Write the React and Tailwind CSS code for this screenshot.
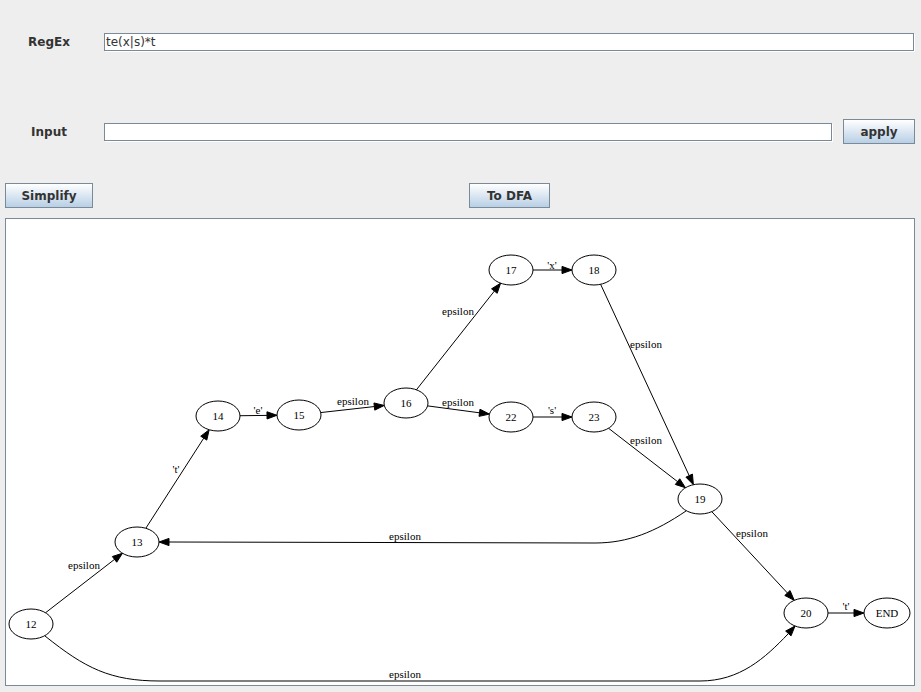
import React from "react";

const N = {
  "12": [31, 624, 22],
  "13": [137, 542, 22],
  "14": [218, 416, 22],
  "15": [299, 415, 22],
  "16": [406, 403, 22],
  "17": [511, 270, 22],
  "18": [594, 270, 22],
  "22": [511, 417, 22],
  "23": [594, 417, 22],
  "19": [700, 499, 22],
  "20": [806, 613, 22],
  END: [887, 613, 23],
};
const RY = 15;

const edges = [
  ["12", "13", "epsilon", 84, 565],
  ["13", "14", "'t'", 176, 469],
  ["14", "15", "'e'", 258, 410],
  ["15", "16", "epsilon", 353, 401],
  ["16", "17", "epsilon", 458, 311],
  ["16", "22", "epsilon", 458, 402],
  ["17", "18", "'x'", 552, 265],
  ["22", "23", "'s'", 552, 410],
  ["18", "19", "epsilon", 646, 344],
  ["23", "19", "epsilon", 646, 440],
  ["19", "20", "epsilon", 752, 533],
  ["20", "END", "'t'", 846, 606],
];

function bnd(c, dx, dy) {
  const [x, y, rx] = c;
  const t = 1 / Math.sqrt((dx / rx) ** 2 + (dy / RY) ** 2);
  return [x + t * dx, y + t * dy];
}

function Arrow({ tip, from }) {
  const dx = tip[0] - from[0];
  const dy = tip[1] - from[1];
  const l = Math.hypot(dx, dy);
  const ux = dx / l, uy = dy / l;
  const bx = tip[0] - 10 * ux, by = tip[1] - 10 * uy;
  const nx = -uy * 3.6, ny = ux * 3.6;
  return (
    <polygon
      points={`${tip[0]},${tip[1]} ${bx + nx},${by + ny} ${bx - nx},${by - ny}`}
      fill="#000"
      stroke="#000"
      strokeWidth="1"
    />
  );
}

function Edge({ a, b }) {
  const A = N[a], B = N[b];
  const dx = B[0] - A[0], dy = B[1] - A[1];
  const s = bnd(A, dx, dy);
  const t = bnd(B, -dx, -dy);
  const l = Math.hypot(t[0] - s[0], t[1] - s[1]);
  const e = [t[0] - ((t[0] - s[0]) / l) * 10, t[1] - ((t[1] - s[1]) / l) * 10];
  return (
    <g>
      <line x1={s[0]} y1={s[1]} x2={e[0]} y2={e[1]} stroke="#000" strokeWidth="1" />
      <Arrow tip={t} from={s} />
    </g>
  );
}

function Label({ x, y, children }) {
  return (
    <text x={x} y={y + 3.5} textAnchor="middle" fontSize="11" fontFamily="'Liberation Serif', serif" fill="#000">
      {children}
    </text>
  );
}

function Graph() {
  return (
    <svg width="908" height="466" viewBox="6 219 908 466" className="block">
      {edges.map(([a, b, lab, lx, ly], i) => (
        <g key={i}>
          <Edge a={a} b={b} />
          <Label x={lx} y={ly}>{lab}</Label>
        </g>
      ))}
      {/* 19 -> 13 */}
      <path d="M 686 511 C 655 532 628 543 595 543 L 169 542" fill="none" stroke="#000" strokeWidth="1" />
      <Arrow tip={[159, 542]} from={[170, 542]} />
      <Label x={405} y={536}>epsilon</Label>
      {/* 12 -> 20 */}
      <path d="M 45 636 C 85 668 110 681 160 681 L 700 681 C 740 681 765 658 788 634" fill="none" stroke="#000" strokeWidth="1" />
      <Arrow tip={[795, 626]} from={[787, 635]} />
      <Label x={405} y={674}>epsilon</Label>
      {Object.entries(N).map(([k, [x, y, rx]]) => (
        <g key={k}>
          <ellipse cx={x} cy={y} rx={rx} ry={RY} fill="#fff" stroke="#000" strokeWidth="1" />
          <text x={x} y={y + 4} textAnchor="middle" fontSize="11" fontFamily="'Liberation Serif', serif" fill="#000">
            {k}
          </text>
        </g>
      ))}
    </svg>
  );
}

const btn =
  "h-[25px] border border-[#7a8a99] bg-gradient-to-b from-white to-[#b8cfe5] text-[12px] font-bold text-[#333] flex items-center justify-center";

export default function App() {
  return (
    <div className="w-[921px] h-[692px] bg-[#eeeeee] overflow-hidden" style={{ fontFamily: "'DejaVu Sans', sans-serif" }}>
      <div className="flex items-center h-[18px] mt-[33px]">
        <div className="w-[98px] mr-[6px] text-center text-[12px] font-bold text-[#333]">RegEx</div>
        <div className="w-[810px] h-[18px] bg-white border border-[#7a8a99] shadow-[1px_1px_0_white] text-[12px] text-[#333] leading-[16px] pl-[1px]">
          te(x|s)*t
        </div>
      </div>
      <div className="flex items-center h-[25px] mt-[68px]">
        <div className="w-[98px] mr-[6px] text-center text-[12px] font-bold text-[#333]">Input</div>
        <div className="w-[728px] h-[18px] bg-white border border-[#7a8a99] shadow-[1px_1px_0_white]" />
        <div className={`${btn} ml-[11px] w-[72px]`}>apply</div>
      </div>
      <div className="flex items-center h-[25px] mt-[39px]">
        <div className={`${btn} ml-[5px] w-[88px]`}>Simplify</div>
        <div className={`${btn} ml-[376px] w-[81px]`}>To DFA</div>
      </div>
      <div className="mt-[10px] ml-[5px] w-[910px] h-[468px] border border-[#7a8a99] bg-white">
        <Graph />
      </div>
    </div>
  );
}
